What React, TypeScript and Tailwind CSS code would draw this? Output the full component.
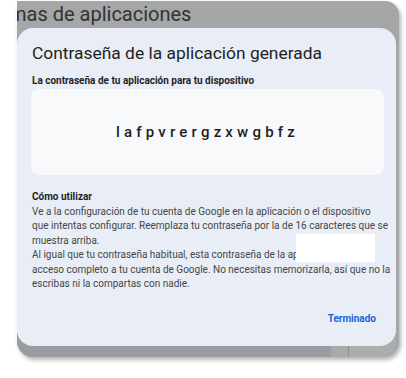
export default function App() {
  return (
    <div className="w-[406px] h-[378px] bg-white font-['Roboto',sans-serif]">
      <div className="pt-[7px] pl-[17px] pr-[7px]">
        <div className="relative bg-[#a5a6a7] rounded-tr-[14px] rounded-b-[16px] shadow-[2px_3px_4px_rgba(0,0,0,0.3)] pr-[3px]">
          <div className="h-[27px] overflow-x-clip">
            <div className="-ml-[8px] -mt-[6px] text-[20px] leading-[26px] text-[#333333] whitespace-nowrap">
              mas de aplicaciones
            </div>
          </div>

          <div className="relative z-10 bg-[#e9eef6] rounded-[16px] h-[318px] pl-[15px] pr-[12px] pt-[13px] flex flex-col">
            <div className="text-[17.4px] leading-[24px] text-[#1f1f1f] whitespace-nowrap">
              Contraseña de la aplicación generada
            </div>
            <div className="mt-[9px] text-[10px] leading-[14px] font-bold text-[#1f1f1f] whitespace-nowrap">
              La contraseña de tu aplicación para tu dispositivo
            </div>
            <div className="mt-[1px] -ml-[1px] h-[86px] bg-[#f8f9fb] rounded-[8px] flex items-center justify-center">
              <span className="text-[15px] font-medium tracking-[4.2px] text-[#1f1f1f]">lafpvrergzxwgbfz</span>
            </div>
            <div className="mt-[15px] text-[10px] leading-[14.5px] text-[#444746] whitespace-nowrap">
              <div className="font-bold text-[#1f1f1f]">Cómo utilizar</div>
              <div>Ve a la configuración de tu cuenta de Google en la aplicación o el dispositivo</div>
              <div>que intentas configurar. Reemplaza tu contraseña por la de 16 caracteres que se</div>
              <div>muestra arriba.</div>
              <div>Al igual que tu contraseña habitual, esta contraseña de la aplicación otorga</div>
              <div>acceso completo a tu cuenta de Google. No necesitas memorizarla, así que no la</div>
              <div>escribas ni la compartas con nadie.</div>
            </div>
            <div className="mt-auto mb-[20px] flex justify-end pr-[8px]">
              <span className="text-[10px] font-bold text-[#1b62d6]">Terminado</span>
            </div>
            <div className="absolute left-[279px] top-[206px] w-[79px] h-[28px] bg-white" />
          </div>

          <div className="-mt-[16px] h-[27px] rounded-b-[16px] overflow-hidden flex">
            <div className="w-[314px] bg-[#999ca0]" />
            <div className="w-[17px] bg-[#a9aaab]" />
            <div className="w-[1px] bg-[#8e8f90]" />
            <div className="flex-1 bg-[#acadae]" />
          </div>
        </div>
      </div>
    </div>
  );
}
